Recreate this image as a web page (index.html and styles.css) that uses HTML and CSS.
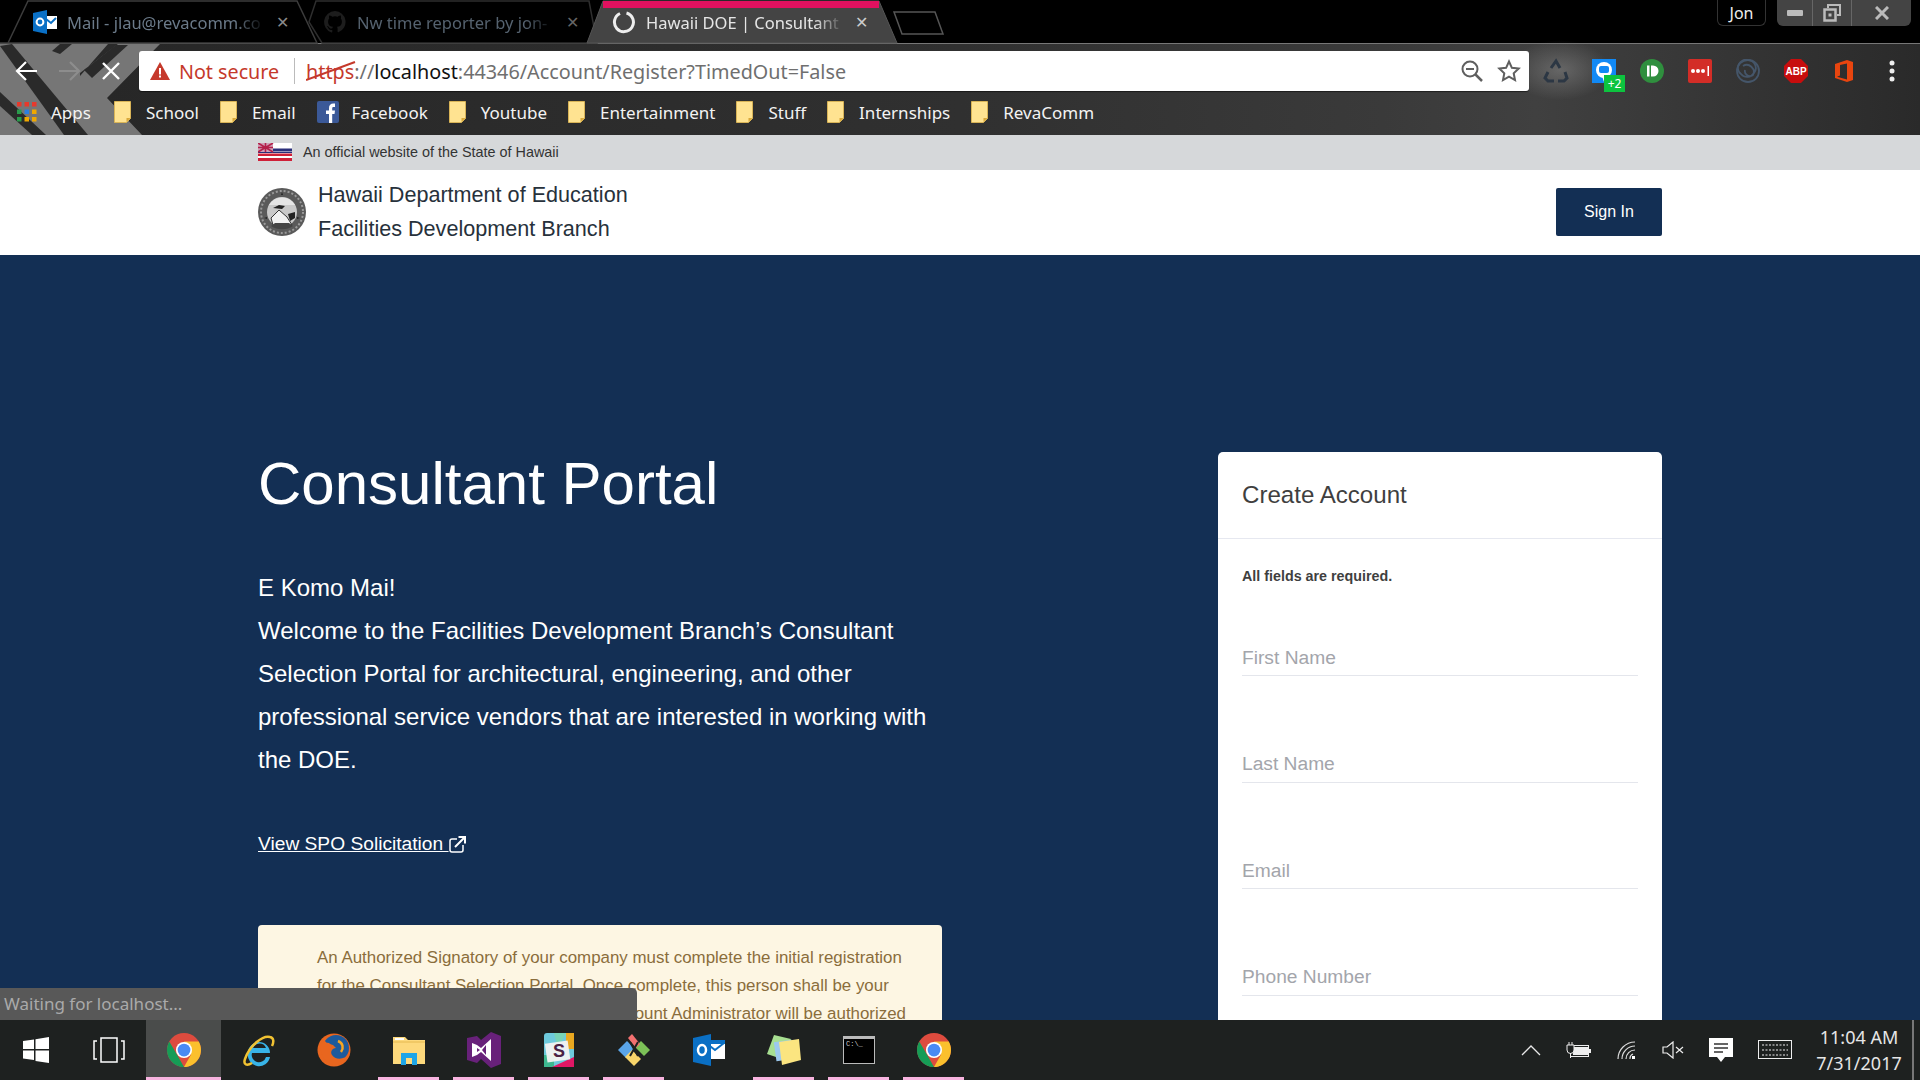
FILE: index.html
```html
<!DOCTYPE html>
<html lang="en">
<head>
<meta charset="utf-8">
<title>Hawaii DOE | Consultant Portal</title>
<link rel="stylesheet" href="styles.css">
</head>
<body>
<div class="browser">
  <svg class="theme" viewBox="0 0 1920 135" width="1920" height="135" aria-hidden="true">
    <defs>
      <linearGradient id="themeFill" x1="0" x2="1" y1="0" y2="0">
        <stop offset="0" stop-color="#262626"/><stop offset=".5" stop-color="#303030"/><stop offset=".72" stop-color="#3a3a3a"/><stop offset=".8" stop-color="#404040"/><stop offset="1" stop-color="#2a2a2a"/>
      </linearGradient>
      <radialGradient id="smudge"><stop offset="0" stop-color="#777" stop-opacity=".7"/><stop offset="1" stop-color="#777" stop-opacity="0"/></radialGradient>
    </defs>
    <rect y="43" width="1920" height="92" fill="url(#themeFill)"/>
    <ellipse cx="1560" cy="70" rx="50" ry="30" fill="url(#smudge)"/>
    <polygon points="0,44 160,44 107,98 142,135 0,135" fill="#767676"/>
    <polygon points="0,46 12,44 88,135 64,135" fill="#2a2a2a"/>
    <polygon points="0,92 0,106 32,135 46,135" fill="#2a2a2a"/>
    <polygon points="52,51 60,44 72,44 60,54" fill="#2a2a2a"/>
    <polygon points="80,73 118,44 108,44 80,76" fill="#2a2a2a"/>
    <polygon points="84,70 116,45 128,45 92,78" fill="#2a2a2a"/>
    <rect y="43" width="1920" height="1" fill="#777"/>
    <path d="M0 43H8L28 1H297L317 43H0Z" fill="#000" stroke="#3c3c3c" stroke-width="1.5"/>
    <path d="M309 22L316 1H589L597 43H322Z" fill="#000" stroke="#2e2e2e" stroke-width="1.5"/>
    <path d="M587 43L603 1H879L897 43Z" fill="#444" stroke="#555"/>
    <rect x="603" y="1" width="276" height="7" fill="#e0115f"/>
    <path d="M894 12H935L943 34H902Z" fill="#000" stroke="#555" stroke-width="1.5"/>
  </svg>

  <div class="tabstrip">
    <div class="tab tab-mail">
      <svg class="tab-icon" viewBox="0 0 24 24"><rect x="9" y="6" width="15" height="13" fill="#fff"/><path d="M13 9l5 4 5-5" fill="none" stroke="#0a70c6" stroke-width="2"/><path d="M0 3l14-3v24L0 21z" fill="#0a70c6"/><circle cx="7" cy="12" r="3.4" fill="none" stroke="#fff" stroke-width="2"/></svg>
      <span class="tab-title dim1">Mail - jlau@revacomm.co</span>
      <span class="tab-x">✕</span>
    </div>
    <div class="tab tab-git">
      <svg class="tab-icon" viewBox="0 0 24 24"><path d="M12 1a11 11 0 0 0-3.500 21.400c.6.1.8-.2.8-.5v-2c-3 .7-3.700-1.300-3.700-1.300-.5-1.300-1.200-1.600-1.200-1.600-1-.7.100-.7.100-.7 1.100.1 1.700 1.100 1.700 1.100 1 1.700 2.600 1.200 3.200.9.100-.7.400-1.200.7-1.500-2.400-.3-5-1.200-5-5.400 0-1.200.4-2.200 1.100-2.900-.1-.3-.5-1.400.1-2.900 0 0 .9-.3 3 1.100a10 10 0 0 1 5.400 0c2.100-1.400 3-1.100 3-1.100.6 1.500.2 2.600.1 2.900.7.700 1.100 1.700 1.100 2.900 0 4.200-2.600 5.100-5 5.400.4.300.7 1 .7 2v3c0 .3.200.6.800.5A11 11 0 0 0 12 1z" fill="#1d1d1d"/></svg>
      <span class="tab-title dim2">Nw time reporter by jon-</span>
      <span class="tab-x dark">✕</span>
    </div>
    <div class="tab tab-active">
      <svg class="tab-icon" viewBox="0 0 24 24"><path d="M9 3.500A9.500 9.500 0 1 0 15.500 3" fill="none" stroke="#eee" stroke-width="3"/></svg>
      <span class="tab-title">Hawaii DOE | Consultant</span>
      <span class="tab-x light">✕</span>
    </div>
    <div class="window-area">
      <div class="profile">Jon</div>
      <div class="win-controls">
        <div class="win-btn win-min"><svg width="16" height="8" viewBox="0 0 16 8"><rect width="16" height="6" y="1" rx="1" fill="#bbb"/></svg></div>
        <div class="win-btn win-max"><svg width="18" height="18" viewBox="0 0 18 18"><path d="M5 4V1h12v10h-3" fill="none" stroke="#bbb" stroke-width="2"/><rect x="1.500" y="5.500" width="11" height="11" fill="none" stroke="#bbb" stroke-width="2.500"/><rect x="5.500" y="9.500" width="3" height="3" fill="#bbb"/></svg></div>
        <div class="win-btn win-close"><svg width="14" height="14" viewBox="0 0 14 14"><path d="M1 1l12 12M13 1L1 13" stroke="#bbb" stroke-width="3"/></svg></div>
      </div>
    </div>
  </div>

  <div class="toolbar">
    <div class="nav">
      <svg width="24" height="24" viewBox="0 0 24 24"><path d="M22 12H3M11 3l-9 9 9 9" fill="none" stroke="#fff" stroke-width="2.200"/></svg>
      <svg width="24" height="24" viewBox="0 0 24 24"><path d="M2 12h19M13 3l9 9-9 9" fill="none" stroke="#8d8d8d" stroke-width="2.200"/></svg>
      <svg class="stop" width="20" height="20" viewBox="0 0 20 20"><path d="M2 2l16 16M18 2L2 18" fill="none" stroke="#fff" stroke-width="2.400"/></svg>
    </div>
    <div class="omnibox">
      <svg class="warn" width="20" height="18" viewBox="0 0 20 18"><path d="M10 0l10 18H0z" fill="#c5392b"/><rect x="9" y="6" width="2" height="6.500" fill="#fff"/><rect x="9" y="13.500" width="2" height="2" fill="#fff"/></svg>
      <span class="not-secure">Not secure</span>
      <span class="omni-sep"></span>
      <span class="url"><span class="scheme">https<svg class="strike" width="50" height="22" viewBox="0 0 50 22"><path d="M0 20L49 2" stroke="#c5392b" stroke-width="2"/></svg></span><span class="grey">://</span><span class="host">localhost</span><span class="grey">:44346/Account/Register?TimedOut=False</span></span>
      <svg class="omni-icon omni-first" width="24" height="24" viewBox="0 0 24 24"><circle cx="10" cy="10" r="7.500" fill="none" stroke="#5f5f5f" stroke-width="2"/><path d="M6 10h8" stroke="#5f5f5f" stroke-width="2"/><path d="M15.500 15.500L22 22" stroke="#5f5f5f" stroke-width="2.500"/></svg>
      <svg class="omni-icon" width="24" height="24" viewBox="0 0 24 24"><path d="M12 2.500l2.900 6.300 6.800.8-5 4.700 1.300 6.800-6-3.400-6 3.400 1.300-6.800-5-4.700 6.800-.8z" fill="none" stroke="#5f5f5f" stroke-width="2"/></svg>
    </div>
    <div class="extensions">
      <svg width="26" height="26" viewBox="0 0 26 26" fill="none" stroke="#2c3744" stroke-width="3"><path d="M8 10l5-7 4 7M22 14l2 6-3 3h-6M11 23H5l-3-3 3-6"/></svg>
      <span class="ext-msg">
        <svg width="24" height="24" viewBox="0 0 24 24"><rect width="24" height="24" fill="#1189f5"/><circle cx="12" cy="11" r="8" fill="#fff"/><path d="M10 17l2 6 3-6z" fill="#fff"/><rect x="7" y="7" width="10" height="7" rx="2" fill="#1189f5"/></svg>
        <span class="ext-badge">+2</span>
      </span>
      <svg width="24" height="24" viewBox="0 0 24 24"><circle cx="12" cy="12" r="12" fill="#2f8f3e"/><path d="M7 6.500h2.500v11H7zM11 6.500h2a5.500 5.500 0 0 1 0 11h-2z" fill="#fff"/></svg>
      <svg width="24" height="24" viewBox="0 0 24 24"><rect width="24" height="24" rx="2" fill="#d32d27"/><circle cx="5" cy="12" r="2" fill="#fff"/><circle cx="10" cy="12" r="2" fill="#fff"/><circle cx="15" cy="12" r="2" fill="#fff"/><rect x="19.500" y="7" width="1.500" height="10" fill="#fff"/></svg>
      <svg width="24" height="24" viewBox="0 0 24 24" fill="none" stroke="#45566a" stroke-width="1.800"><circle cx="12" cy="12" r="11"/><path d="M12 1a8 8 0 0 1 6 13 8 8 0 0 1-13 1 8 8 0 0 1 7-14zM7 7a7 7 0 0 1 10 9 5 5 0 0 1-8-5"/></svg>
      <svg width="24" height="24" viewBox="0 0 24 24"><path d="M7 0h10l7 7v10l-7 7H7l-7-7V7z" fill="#c70d0d"/><text class="abp" x="12" y="16">ABP</text></svg>
      <svg width="20" height="24" viewBox="0 0 20 24"><path d="M1 5L13 1l6 2v18l-6 2-12-4zM13 4.500L6 6v10.500l-3 1.300 10 2.700z" fill="#e8450f" fill-rule="evenodd"/></svg>
      <svg width="8" height="24" viewBox="0 0 8 24"><circle cx="4" cy="4" r="2.500" fill="#eee"/><circle cx="4" cy="12" r="2.500" fill="#eee"/><circle cx="4" cy="20" r="2.500" fill="#eee"/></svg>
    </div>
  </div>

  <div class="bookmarks">
    <span class="bm bm-apps"><svg class="bm-icon" width="20" height="20" viewBox="0 0 20 20"><g><rect width="4.500" height="4.500" fill="#e8392c"/><rect x="7.500" width="4.500" height="4.500" fill="#e8392c"/><rect x="15" width="4.500" height="4.500" fill="#e8392c"/><rect y="7.500" width="4.500" height="4.500" fill="#2a9a4c"/><rect x="7.500" y="7.500" width="4.500" height="4.500" fill="#2b7fe0"/><rect x="15" y="7.500" width="4.500" height="4.500" fill="#f0a800"/><rect y="15" width="4.500" height="4.500" fill="#2a9a4c"/><rect x="7.500" y="15" width="4.500" height="4.500" fill="#f0a800"/><rect x="15" y="15" width="4.500" height="4.500" fill="#f0a800"/></g></svg>Apps</span>
    <span class="bm"><svg class="bm-icon" width="17" height="22" viewBox="0 0 17 22"><use href="#folder"/></svg>School</span>
    <span class="bm"><svg class="bm-icon" width="17" height="22" viewBox="0 0 17 22"><use href="#folder"/></svg>Email</span>
    <span class="bm bm-fb"><svg class="bm-icon" width="22" height="22" viewBox="0 0 22 22"><rect width="22" height="22" rx="2" fill="#3b5998"/><path d="M12 22v-9H9V9.500h3V7c0-3 1.800-4.500 4.300-4.500H18V6h-1.500c-1 0-1.300.6-1.300 1.400v2.100H18l-.5 3.500h-2.300v9z" fill="#fff"/></svg>Facebook</span>
    <span class="bm"><svg class="bm-icon" width="17" height="22" viewBox="0 0 17 22"><use href="#folder"/></svg>Youtube</span>
    <span class="bm"><svg class="bm-icon" width="17" height="22" viewBox="0 0 17 22"><use href="#folder"/></svg>Entertainment</span>
    <span class="bm"><svg class="bm-icon" width="17" height="22" viewBox="0 0 17 22"><use href="#folder"/></svg>Stuff</span>
    <span class="bm"><svg class="bm-icon" width="17" height="22" viewBox="0 0 17 22"><use href="#folder"/></svg>Internships</span>
    <span class="bm"><svg class="bm-icon" width="17" height="22" viewBox="0 0 17 22"><use href="#folder"/></svg>RevaComm</span>
  </div>
</div>

<svg class="defs" width="0" height="0" aria-hidden="true">
  <defs>
    <g id="folder"><path d="M.5 .5h16v17l-4 4H.5z" fill="#ffe391" stroke="#d9b457"/><path d="M12.500 21v-4h4" fill="#d9a83a"/></g>
    <g id="chrome">
      <circle cx="20" cy="20" r="20" fill="#dd4b3e"/>
      <path d="M20 40A20 20 0 0 1 2.700 10L12 26l8 14z" fill="#169c56"/>
      <path d="M20 40A20 20 0 0 0 37.300 10H20l8 16z" fill="#fbc02d"/>
      <circle cx="20" cy="20" r="9.500" fill="#fff"/>
      <circle cx="20" cy="20" r="7.500" fill="#4a8af4"/>
    </g>
  </defs>
</svg>

<main class="viewport">
  <div class="gov-banner">
    <div class="wrap gov-inner">
      <svg class="flag" width="34" height="18" viewBox="0 0 34 18"><rect width="34" height="18" fill="#fff"/><rect y="5.500" width="34" height="2.500" fill="#2a2f7a"/><rect y="10.500" width="34" height="2.500" fill="#cf2038"/><rect y="15" width="34" height="3" fill="#cf2038"/><rect y="8.500" width="34" height="1.500" fill="#2a2f7a"/><rect width="15" height="9" fill="#cfa0b8"/><path d="M0 0l15 9M15 0L0 9M7.500 0v9M0 4.500h15" stroke="#b3204a" stroke-width="1.600"/></svg>
      <span class="gov-text">An official website of the State of Hawaii</span>
    </div>
  </div>
  <header class="site-header">
    <div class="wrap header-inner">
      <div class="brand">
        <svg class="seal" width="48" height="48" viewBox="0 0 48 48">
          <circle cx="24" cy="24" r="24" fill="#5a5a5a"/>
          <circle cx="24" cy="24" r="21" fill="none" stroke="#9a9a9a" stroke-width="2" stroke-dasharray="2 2"/>
          <circle cx="24" cy="24" r="15" fill="#c9c9c9"/>
          <path d="M11 17a15 15 0 0 1 26 0z" fill="#e5e5e5"/>
          <path d="M15 20l6-3 6 1-3 3zM30 26l7-2 0 6-5 3z" fill="#222"/>
          <path d="M13 30l8-8 8 7 5 8H15z" fill="#f1f1f1" stroke="#333"/>
          <path d="M13 38a20 20 0 0 0 22 0l-4-3H17z" fill="#444"/>
          <path d="M24 4l1 3-2 0zM6 30l3-1 0 2zM42 30l-3-1 0 2z" fill="#222"/>
        </svg>
        <div class="brand-text">
          <div>Hawaii Department of Education</div>
          <div>Facilities Development Branch</div>
        </div>
      </div>
      <a class="sign-in">Sign In</a>
    </div>
  </header>
  <section class="hero">
    <div class="wrap hero-inner">
      <div class="intro">
        <h1>Consultant Portal</h1>
        <p class="lead">E Komo Mai!<br>Welcome to the Facilities Development Branch’s Consultant Selection Portal for architectural, engineering, and other professional service vendors that are interested in working with the DOE.</p>
        <a class="spo">View SPO Solicitation <svg class="ext-link" width="17" height="17" viewBox="0 0 17 17"><path d="M8 3H3a2 2 0 0 0-2 2v9a2 2 0 0 0 2 2h9a2 2 0 0 0 2-2V9" fill="none" stroke="#fff" stroke-width="1.500"/><path d="M6 11L15 2M9.500 1H16v6.500" fill="none" stroke="#fff" stroke-width="2"/></svg></a>
        <div class="notice">An Authorized Signatory of your company must complete the initial registration<br>for the Consultant Selection Portal. Once complete, this person shall be your<br>company’s Account Administrator. The Account Administrator will be authorized</div>
      </div>
      <form class="card">
        <div class="card-title">Create Account</div>
        <div class="card-body">
          <p class="required">All fields are required.</p>
          <div class="field">First Name</div>
          <div class="field">Last Name</div>
          <div class="field">Email</div>
          <div class="field">Phone Number</div>
        </div>
      </form>
    </div>
  </section>
  <div class="status-bubble">Waiting for localhost...</div>
</main>

<footer class="taskbar">
  <div class="start"><svg width="26" height="26" viewBox="0 0 26 26"><path d="M0 4l11-1.500V12H0zM12.500 2.300L26 0v12H12.500zM0 13.500h11V23L0 21.500zM12.500 13.500H26V26l-13.500-2z" fill="#fff"/></svg></div>
  <div class="task-view"><svg width="32" height="26" viewBox="0 0 32 26" fill="none" stroke="#fff" stroke-width="1.500"><rect x="8" y="1" width="16" height="24"/><path d="M4 4H1v18h3M28 4h3v18h-3"/></svg></div>
  <div class="task-apps">
    <div class="app active open"><svg width="34" height="34" viewBox="0 0 40 40"><use href="#chrome"/></svg></div>
    <div class="app"><svg width="34" height="34" viewBox="0 0 34 34"><path d="M6 20a11 11 0 1 1 22 0H10a7 7 0 0 0 14 4h4a11 11 0 0 1-22-4zM11 15h13a7 7 0 0 0-13 0z" fill="#38b4e8" fill-rule="evenodd"/><path d="M28 4C21 2 8 12 3 26c-2 6 2 7 7 4M28 4c4 1 4 5 2 9" fill="none" stroke="#f1c232" stroke-width="2.500"/></svg></div>
    <div class="app"><svg width="34" height="34" viewBox="0 0 34 34"><circle cx="17" cy="17" r="16.500" fill="#e8661f"/><circle cx="19" cy="15" r="13" fill="#1d5a9c"/><path d="M6 6c-4 8-3 20 8 25 8 3 16-2 19-10-6 6-15 6-18 1-2-3 0-7 4-7l-3-3c-3 0-4-3-6-2-2-2-3-3-4-4z" fill="#e8661f"/><path d="M21 8c5 2 6 7 3 11" fill="none" stroke="#f5a623" stroke-width="2.500"/></svg></div>
    <div class="app open"><svg width="34" height="30" viewBox="0 0 34 30"><path d="M1 2h12l3 3h17v24H1z" fill="#fdd97c"/><rect x="3" y="3" width="9" height="2" fill="#fff"/><path d="M1 7h32" stroke="#e5b94f"/><path d="M9 30V18h16v12h-5v-7h-6v7z" fill="#1da5e8"/></svg></div>
    <div class="app open"><svg width="34" height="36" viewBox="0 0 34 36"><path d="M0 6l10-2 4 4L24 0l10 4v28l-10 4-10-9-4 4-10-3z" fill="#68217a"/><path d="M5 11l5 2 4 3 10-9v22l-10-9-4 3-5 2zM10 16v4l3-2zM19 13l-4 5 4 5z" fill="#fff" fill-rule="evenodd"/></svg></div>
    <div class="app open"><svg width="30" height="34" viewBox="0 0 30 34"><rect width="30" height="34" rx="3" fill="#6ecadc"/><path d="M22 0h8v16H22z" fill="#e9a820"/><path d="M10 0h12L14 16z" fill="#78d4b6"/><path d="M0 22h10v12H0z" fill="#3eb890"/><path d="M8 34l22-10v10z" fill="#e01765"/><rect x="2" y="9" width="23" height="19" fill="#f2f2f2" opacity=".95" transform="rotate(-8 14 18)"/><text class="slack-s" x="15" y="24">S</text></svg></div>
    <div class="app open"><svg width="36" height="36" viewBox="0 0 36 36"><path d="M2 18l9-9 8 8-9 9z" fill="#5aa5e8"/><path d="M34 18l-9-9-6 6 9 9z" fill="#7cc157"/><path d="M18 34l-9-9 7-7 9 9z" fill="#f8d56a"/><path d="M12 6l4-4 8 10-4 4z" fill="#f27070"/><path d="M14 10l8 14M22 10l-8 14" stroke="#1e2120" stroke-width="2"/></svg></div>
    <div class="app"><svg width="32" height="32" viewBox="0 0 32 32"><path d="M12 7h20v18H12z" fill="#fff"/><path d="M13 9l9 7 9-7M12 7h20v2H12z" fill="none" stroke="#0a6fc4" stroke-width="2"/><path d="M0 4L18 0v32L0 28z" fill="#0a6fc4"/><ellipse cx="9" cy="16" rx="4" ry="5" fill="none" stroke="#fff" stroke-width="2.500"/></svg></div>
    <div class="app open"><svg width="34" height="30" viewBox="0 0 34 30"><path d="M7 0L24 4 15 24 0 19z" fill="#a7df91"/><rect x="8" y="6" width="18" height="19" fill="#9cc9ee" transform="rotate(-8 17 15)"/><path d="M12 7l20-3 2 21-19 5z" fill="#fbe580"/></svg></div>
    <div class="app open"><svg width="32" height="28" viewBox="0 0 32 28"><rect width="32" height="28" fill="#bbb"/><rect x="1" y="3" width="30" height="24" fill="#000"/><text class="cmd-text" x="3" y="10">C:\_</text></svg></div>
    <div class="app open"><svg width="34" height="34" viewBox="0 0 40 40"><use href="#chrome"/></svg></div>
  </div>
  <div class="tray">
    <svg width="20" height="12" viewBox="0 0 20 12"><path d="M1 11l9-9 9 9" fill="none" stroke="#e8e8e8" stroke-width="1.300"/></svg>
    <svg width="26" height="16" viewBox="0 0 26 16"><rect x="4.500" y="3.500" width="18" height="11" fill="#1e2120" stroke="#eee"/><rect x="7" y="5" width="15" height="8" fill="#eee"/><rect x="23" y="7" width="2" height="4" fill="#eee"/><path d="M1 3h7v5a3 3 0 0 1-7 0zM3 0v3M6 0v3M4.500 11v5" fill="#1e2120" stroke="#eee"/></svg>
    <svg width="20" height="18" viewBox="0 0 20 18" fill="none" stroke="#ddd" stroke-width="1.200"><path d="M1 18A17 17 0 0 1 18 1M5 18A13 13 0 0 1 18 5M9 18a9 9 0 0 1 9-9M13 18a5 5 0 0 1 3-5"/><rect x="15" y="15" width="3" height="3" fill="#fff" stroke="none"/></svg>
    <svg width="22" height="18" viewBox="0 0 22 18" fill="none" stroke="#eee" stroke-width="1.200"><path d="M1 6h4l6-5v16l-6-5H1zM14 6l7 6M21 6l-7 6"/></svg>
    <svg width="24" height="24" viewBox="0 0 24 24"><path d="M0 0h24v19h-8l-4 5-4-5H0z" fill="#fff"/><path d="M5 6h14M5 10h14M5 14h9" stroke="#333" stroke-width="1.300"/></svg>
    <svg width="34" height="20" viewBox="0 0 34 20" fill="none" stroke="#eee" stroke-width="1"><rect x=".5" y=".5" width="33" height="18"/><path d="M4 5h26M4 10h26M4 15h26" stroke-dasharray="2 1.500"/></svg>
  </div>
  <div class="clock"><div>11:04 AM</div><div>7/31/2017</div></div>
  <div class="show-desktop"></div>
</footer>
</body>
</html>
```

FILE: styles.css
```css
* { box-sizing: border-box; }
html, body { margin: 0; height: 100%; }
body {
  width: 1920px;
  height: 1080px;
  overflow: hidden;
  display: flex;
  flex-direction: column;
  font-family: "Liberation Sans", Arial, sans-serif;
  background: #132f54;
}
.defs { position: absolute; }

/* Browser chrome */
.browser { position: relative; height: 135px; flex: none; background: #000; font-family: "Noto Sans", "Open Sans", sans-serif; }
.theme { position: absolute; left: 0; top: 0; }
.tabstrip { position: relative; height: 43px; display: flex; align-items: center; }
.tab { display: flex; align-items: center; height: 43px; padding-top: 1px; }
.tab-mail { width: 310px; padding-left: 33px; }
.tab-git { width: 280px; padding-left: 13px; }
.tab-active { width: 294px; padding-left: 21px; }
.tab-icon { width: 24px; height: 24px; flex: none; }
.tab-title {
  flex: none;
  width: 198px;
  margin-left: 10px;
  font-size: 16.5px;
  white-space: nowrap;
  overflow: hidden;
  color: #e6e6e6;
  -webkit-mask-image: linear-gradient(to right, #000 85%, transparent);
  mask-image: linear-gradient(to right, #000 85%, transparent);
}
.tab-active .tab-title { margin-left: 11px; }
.dim1 { color: #6b7a89; }
.dim2 { color: #55626f; }
.tab-x { margin-left: 11px; font-size: 16px; color: #8a8a8a; }
.tab-x.dark { color: #666; }
.tab-x.light { color: #ccc; }
.window-area { margin-left: auto; display: flex; align-self: flex-start; gap: 11px; margin-right: 9px; }
.profile {
  width: 49px; height: 26px;
  display: flex; align-items: center; justify-content: center;
  color: #eee; font-size: 16px;
  background: #000;
  border: 1px solid #333; border-top: none;
  border-radius: 0 0 6px 6px;
}
.win-controls { display: flex; height: 26px; background: #444; border-radius: 0 0 6px 6px; }
.win-btn { display: flex; align-items: center; justify-content: center; border-right: 1px solid #666; }
.win-min { width: 36px; }
.win-max { width: 39px; }
.win-close { width: 59px; border-right: none; }

.toolbar { position: relative; height: 56px; display: flex; align-items: center; }
.nav { width: 139px; display: flex; align-items: center; padding-left: 15px; gap: 18px; flex: none; }
.stop { margin-left: 2px; }
.omnibox {
  width: 1390px; height: 40px;
  display: flex; align-items: center;
  background: #fff;
  border-radius: 3px;
  padding: 0 8px 0 11px;
  box-shadow: 0 1px 1px rgba(0,0,0,.5);
}
.warn { flex: none; }
.not-secure { margin-left: 9px; font-size: 19.7px; color: #c5392b; white-space: nowrap; }
.omni-sep { width: 1px; height: 26px; background: #bbb; margin: 0 11px 0 15px; }
.url { font-size: 19.8px; white-space: nowrap; }
.scheme { position: relative; color: #c5392b; }
.strike { position: absolute; left: 0; top: 2px; }
.grey { color: #6f6f6f; }
.host { color: #111; }
.omni-icon { flex: none; margin-left: 13px; }
.omni-first { margin-left: auto; }
.extensions { flex: none; display: grid; grid-template-columns: repeat(8, 48px); justify-items: center; align-items: center; margin-left: 3px; }
.ext-msg { position: relative; display: block; width: 24px; height: 24px; }
.ext-msg svg { display: block; }
.ext-badge {
  position: absolute; left: 12px; top: 16px;
  width: 21px; height: 17px;
  background: #0dc33f; color: #fff;
  font-size: 12px; line-height: 17px; text-align: center;
}
.abp { font: bold 10px "Liberation Sans", sans-serif; fill: #fff; text-anchor: middle; }

.bookmarks { position: relative; height: 36px; padding: 0 0 10px 17px; display: flex; align-items: center; gap: 21px; }
.bm { display: flex; align-items: center; gap: 15px; color: #f3f3f3; font-size: 17px; white-space: nowrap; }
.bm-apps { gap: 14px; margin-right: 2px; }
.bm-fb { gap: 13px; }
.bm-icon { flex: none; }

/* Page */
.viewport { position: relative; flex: 1; min-height: 0; overflow: hidden; background: #132f54; }
.wrap { width: 1404px; margin: 0 auto; }
.gov-banner { height: 35px; background: #d6d8da; }
.gov-inner { height: 100%; display: flex; align-items: center; gap: 11px; font-size: 14.4px; color: #333; }
.gov-text { padding-bottom: 2px; }
.flag { flex: none; margin-bottom: 1px; }
.site-header { height: 85px; background: #fff; }
.header-inner { height: 100%; display: flex; align-items: center; justify-content: space-between; }
.brand { display: flex; align-items: center; gap: 12px; }
.seal { flex: none; margin-bottom: 1px; }
.brand-text { font-size: 21.6px; line-height: 34px; color: #27313b; padding-bottom: 2px; }
.sign-in {
  width: 106px; height: 48px;
  margin-bottom: 2px;
  display: flex; align-items: center; justify-content: center;
  background: #132f54; color: #fff;
  font-size: 16px; border-radius: 2px;
}
.hero { padding-top: 197px; }
.hero-inner { display: flex; justify-content: space-between; align-items: flex-start; }
.intro { width: 684px; color: #fff; }
h1 { margin: 0; font-size: 60px; font-weight: 400; line-height: 64px; }
.lead { margin: 50px 0 0; font-size: 24px; line-height: 43px; }
.spo { display: block; margin-top: 51px; font-size: 19.2px; line-height: 24px; color: #fff; text-decoration: underline; }
.ext-link { vertical-align: -3px; }
.notice {
  margin-top: 69px;
  padding: 19px 20px 19px 59px;
  background: #fdf6e3;
  border-radius: 4px;
  color: #8a6d3b;
  font-size: 16.9px;
  line-height: 28px;
  white-space: nowrap;
}
.card { width: 444px; background: #fff; border-radius: 5px; color: #3f3f3f; }
.card-title { height: 87px; padding: 0 24px; display: flex; align-items: center; font-size: 24.1px; border-bottom: 1px solid #e6e8f0; }
.card-body { padding: 0 24px 120px; }
.required { margin: 27px 0 0; font-size: 14.3px; font-weight: 700; line-height: 20px; }
.field {
  height: 36px;
  margin-top: 70.5px;
  display: flex; align-items: center;
  font-size: 19.2px;
  color: #a3a5ab;
  border-bottom: 1px solid #e4e6ec;
}
.required + .field { margin-top: 54px; }
.status-bubble {
  position: absolute; left: 0; bottom: 0;
  width: 637px; height: 32px;
  background: #585858;
  border-radius: 0 5px 0 0;
  color: #aaa;
  padding-left: 4px;
  font: 17px/32px "Noto Sans", sans-serif;
}

/* Taskbar */
.taskbar { height: 60px; flex: none; display: flex; align-items: stretch; background: #1e2120; color: #eee; }
.start { width: 71px; display: flex; align-items: center; justify-content: center; }
.task-view { width: 75px; display: flex; align-items: center; justify-content: center; }
.task-apps { display: flex; }
.app { width: 75px; display: flex; align-items: center; justify-content: center; position: relative; }
.app.active { background: #4a4c4b; }
.app.open::after {
  content: "";
  position: absolute; left: 7px; right: 7px; bottom: 0; height: 3px;
  background: #f8b4e0;
}
.app.active.open::after { left: 0; right: 0; }
.slack-s { font: bold 18px "Liberation Sans", sans-serif; fill: #4a2145; text-anchor: middle; }
.cmd-text { font: 7px "Liberation Mono", monospace; fill: #ccc; }
.tray { margin-left: auto; display: flex; align-items: center; gap: 25px; margin-right: 20px; }
.clock { width: 94px; margin-right: 6px; text-align: center; font: 18px/26px "Noto Sans", sans-serif; display: flex; flex-direction: column; justify-content: center; color: #e6e6e6; white-space: nowrap; }
.show-desktop { width: 8px; flex: none; border-left: 2px solid #777; }
```
